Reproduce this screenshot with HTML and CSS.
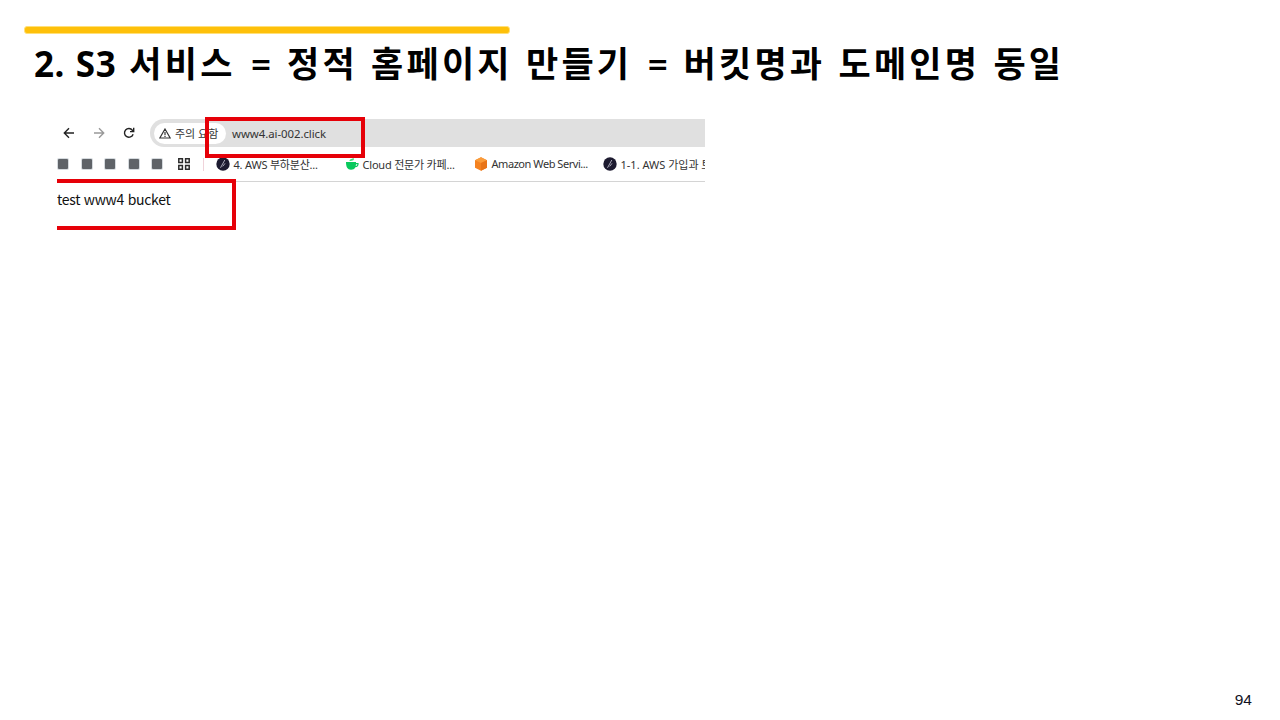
FILE: index.html
```
<!DOCTYPE html>
<html lang="ko">
	<head>
		<meta charset="UTF-8" />
		<title>S3 서비스</title>
		<link rel="stylesheet" href="styles.css">
	</head>
	<body>
		<div class="slide">
			<div class="top-line"></div>
			<h1 class="title">2. S3 <span class="first">서비스</span> <b class="eq">=</b> <span>정적 홈페이지 만들기</span> <b class="eq">=</b> <span>버킷명과 도메인명 동일</span></h1>
			<div class="shot">
				<div class="browser">
					<div class="toolbar">
						<svg class="nav" viewBox="0 0 12 12"><path d="M11 6H1.5M6 1.3L1.3 6L6 10.7" /></svg>
						<svg class="nav forward" viewBox="0 0 12 12"><path d="M1 6h9.5M6 1.3L10.7 6L6 10.7" /></svg>
						<svg class="nav" viewBox="0 0 12 12"><path d="M10.1 7.2A4.4 4.4 0 1 1 9.4 3.2L10.6 4.5M10.7 .8v3.8H7" /></svg>
						<div class="address">
							<div class="chip">
								<svg class="warn" viewBox="0 0 12 11"><path d="M6 1L11.2 10H.8zM6 4v3M6 7.8v1.2" /></svg>
								<span>주의 요함</span>
							</div>
							<span class="url">www4.ai-002.click</span>
						</div>
					</div>
					<div class="bookmarks">
						<i class="block"></i>
						<i class="block"></i>
						<i class="block"></i>
						<i class="block"></i>
						<i class="block"></i>
						<svg class="apps" viewBox="0 0 12 12"><path d="M.8.8h3.6v3.6H.8zM7.6.8h3.6v3.6H7.6zM.8 7.6h3.6v3.6H.8zM7.6 7.6h3.6v3.6H7.6z" /></svg>
						<i class="divider"></i>
						<div class="mark">
							<svg viewBox="0 0 14 14"><circle cx="7" cy="7" r="6.7" fill="#1d1b30" /><path d="M4.500 10.800L8.800 3M6.700 9.400L9 6.400" stroke="#aaa9b8" stroke-width="1" fill="none" /></svg>
							<span>4. AWS 부하분산...</span>
						</div>
						<div class="mark">
							<svg viewBox="0 0 14 14"><path d="M1 5h10v1h2.6c.3 3-1.3 4.2-3.3 4.2C9.5 12 8 12.7 6 12.7C2.5 12.7 1 10 1 5z" fill="#08c95c" /><path d="M11 7.2h1.3c0 1-.5 1.6-1.6 1.7z" fill="#fff" /><path d="M4.5 4C4.5 1.5 8 2.5 8.2 .8C10 3 8 4 4.5 4z" fill="#43df7e" /></svg>
							<span>Cloud 전문가 카페...</span>
						</div>
						<div class="mark">
							<svg viewBox="0 0 14 14"><path d="M7 .3L13 3.3V10.7L7 13.7L1 10.7V3.3z" fill="#f58220" /><path d="M7 .3L13 3.3L7 6L1 3.3z" fill="#fa9c3b" /><path d="M7 6L13 3.3V10.7L7 13.7z" fill="#e87418" /></svg>
							<span class="amazon">Amazon Web Servi...</span>
						</div>
						<div class="mark">
							<svg viewBox="0 0 14 14"><circle cx="7" cy="7" r="6.7" fill="#1d1b30" /><path d="M4.500 10.800L8.800 3M6.700 9.400L9 6.400" stroke="#aaa9b8" stroke-width="1" fill="none" /></svg>
							<span class="last">1-1. AWS 가입과 트</span>
						</div>
					</div>
					<div class="page">test www4 bucket</div>
				</div>
				<!-- 강조 박스 -->
				<div class="box box-url"></div>
				<div class="box box-page"></div>
			</div>
			<div class="page-num">94</div>
		</div>
	</body>
</html>
```
FILE: styles.css
```
* {
	margin: 0;
	padding: 0;
	box-sizing: border-box;
}

body {
	background: #fff;
	font-family: "Noto Sans", "Noto Sans CJK KR", sans-serif;
}

.slide {
	display: flex;
	flex-direction: column;
	width: 1280px;
	height: 720px;
	padding: 26px 28px 10px 24px;
	overflow: hidden;
}

.top-line {
	width: 486px;
	height: 8px;
	border: 1px solid #ffe07a;
	border-radius: 3px;
	background: #fec00a;
}

.title {
	height: 60px;
	margin-left: 10px;
	font-size: 35px;
	line-height: 60px;
	letter-spacing: .6px;
	word-spacing: 1px;
	white-space: nowrap;
	color: #000;
}

.title span {
	letter-spacing: 3.2px;
}

.title .first {
	margin-left: 2.4px;
}

.eq {
	margin: 0 4.6px 0 4.8px;
	font-weight: 600;
}

.shot {
	position: relative;
	width: 648px;
	height: 112px;
	margin: 25px 0 0 33px;
}

.browser {
	width: 648px;
	height: 112px;
	overflow: hidden;
	color: #333;
}

.toolbar {
	display: flex;
	align-items: center;
	height: 28px;
	padding-left: 6px;
}

.nav {
	flex: none;
	width: 12px;
	height: 12px;
	margin-right: 18px;
	fill: none;
	stroke: #222;
	stroke-width: 1.4;
}

.nav.forward {
	stroke: #999;
}

.address {
	display: flex;
	flex: 1;
	align-items: center;
	height: 28px;
	margin-left: -3px;
	padding-left: 4px;
	border-radius: 14px 0 0 14px;
	background: #e0e0e0;
	font-size: 11.4px;
}

.chip {
	display: flex;
	align-items: center;
	width: 72px;
	height: 21px;
	padding-left: 5px;
	border-radius: 11px;
	background: #fff;
	font-size: 11px;
	white-space: nowrap;
}

.chip span {
	padding-bottom: 1px;
}

.warn {
	width: 12px;
	height: 11px;
	margin-right: 4px;
	fill: none;
	stroke: #333;
	stroke-width: 1.2;
}

.url {
	margin-left: 6px;
	letter-spacing: -.05px;
}

.bookmarks {
	display: flex;
	align-items: center;
	height: 35px;
	border-bottom: 1px solid #d4d4d4;
	font-size: 11px;
	white-space: nowrap;
}

.block {
	flex: none;
	width: 10px;
	height: 10px;
	margin: 0 12.5px 0 1px;
	border-radius: 1px;
	background: #5f6368;
	box-shadow: 0 0 0 1px #d5dade;
}

.apps {
	flex: none;
	width: 12px;
	height: 12px;
	margin-left: 3px;
	fill: none;
	stroke: #2b2b2b;
	stroke-width: 1.5;
}

.divider {
	flex: none;
	width: 1px;
	height: 13px;
	margin: 0 12px 0 13px;
	background: #f0d3da;
}

.mark {
	display: flex;
	flex: none;
	align-items: center;
	width: 129px;
	letter-spacing: -.2px;
}

.mark svg {
	flex: none;
	width: 14px;
	height: 14px;
	margin-right: 4px;
}

.mark span {
	padding-bottom: 1px;
}

.mark .amazon {
	letter-spacing: -.45px;
}

.mark .last {
	letter-spacing: 0;
}

.page {
	padding-top: 7px;
	font-family: "Noto Sans CJK KR", sans-serif;
	font-size: 14px;
	line-height: 20px;
	letter-spacing: -.3px;
	color: #111;
}

.box {
	position: absolute;
	border: 4px solid #e60008;
}

.box-url {
	left: 148px;
	top: -2px;
	width: 160px;
	height: 41px;
}

.box-page {
	left: 0;
	top: 60px;
	width: 179px;
	height: 51px;
	border-left: none;
}

.page-num {
	margin-top: auto;
	font-family: "Liberation Sans", Arial, sans-serif;
	font-size: 15.5px;
	line-height: 20px;
	text-align: right;
	color: #111122;
}
```
